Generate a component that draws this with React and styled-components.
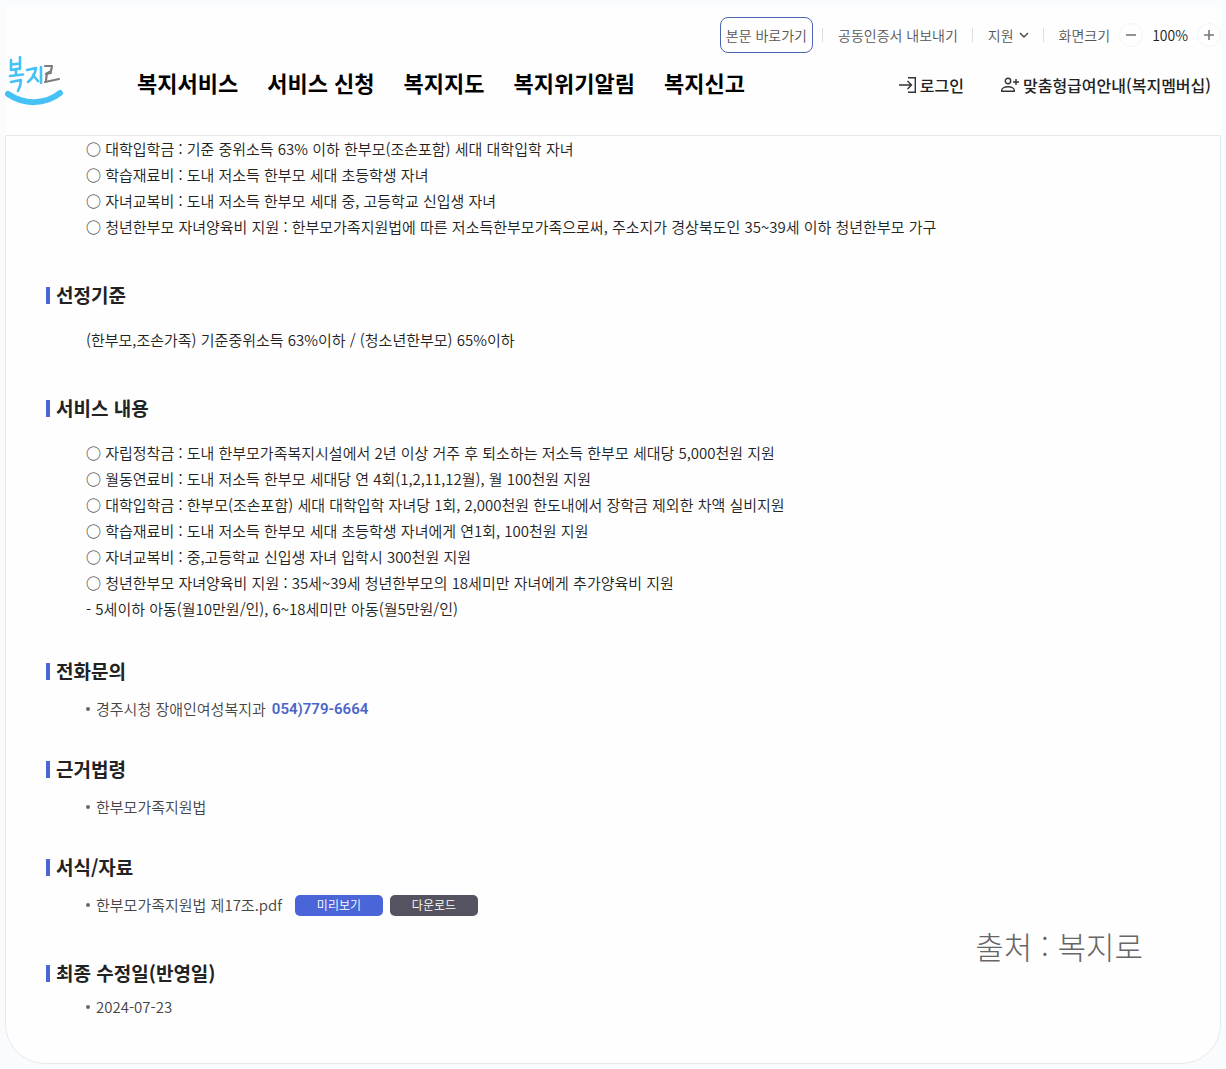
import React, { useState } from "react";
import styled, { createGlobalStyle } from "styled-components";

const sans = '"Noto Sans CJK KR", "Noto Sans", sans-serif';

const GlobalStyle = createGlobalStyle`
  *, *::before, *::after { box-sizing: border-box; }
  body {
    margin: 0;
    background: #fafbfd;
    color: #222;
    font-family: ${sans};
    font-size: 15px;
    font-weight: 350;
    line-height: 26px;
  }
  ul, p, h2 { margin: 0; padding: 0; }
  ul { list-style: none; }
  a { color: inherit; text-decoration: none; }
  button { font: inherit; color: inherit; cursor: pointer; }
`;

const Page = styled.div`
  padding: 7px 5px 5px;
`;

const Header = styled.header`
  padding-top: 10px;
  padding-bottom: 24px;
  background: #fefefe;
`;

const Utility = styled.div`
  display: flex;
  align-items: center;
  justify-content: flex-end;
  height: 36px;
  color: #555;
  font-size: 14px;
`;

const SkipLink = styled.a`
  height: 36px;
  padding: 0 5px;
  border: 1px solid #4a64b4;
  border-radius: 8px;
  line-height: 34px;
`;

const Divider = styled.span`
  width: 1px;
  height: 14px;
  margin: 0 15px 0 ${(p) => p.$left || 14}px;
  background: #ddd;
`;

const MenuButton = styled.button`
  display: flex;
  align-items: center;
  gap: 5px;
  padding: 0;
  border: 0;
  background: none;
`;

const ZoomGroup = styled.div`
  display: flex;
  align-items: center;
  gap: 9px;
`;

const ZoomButton = styled.button`
  display: flex;
  align-items: center;
  justify-content: center;
  width: 24px;
  height: 24px;
  padding: 0;
  border: 1px solid #f4f4f4;
  border-radius: 50%;
  background: none;
`;

const ZoomValue = styled.output`
  color: #222;
`;

const MainRow = styled.div`
  display: flex;
  align-items: center;
  height: 58px;
`;

const LogoLink = styled.a`
  display: flex;
  margin-right: 72px;
`;

const MenuArea = styled.div`
  display: flex;
  flex: 1;
  align-items: flex-end;
  justify-content: space-between;
`;

const Nav = styled.nav`
  display: flex;
  gap: 29px;
  color: #000;
  font-size: 22px;
  font-weight: 700;
  line-height: 32px;
`;

const Account = styled.div`
  display: flex;
  gap: 36px;
  padding-right: 10px;
  font-size: 16px;
  font-weight: 500;
`;

const AccountLink = styled.a`
  display: flex;
  align-items: center;
  gap: 3px;
`;

const Article = styled.main`
  padding: 0 40px 43px;
  border: 1px solid #e6eaef;
  border-radius: 0 0 40px 40px;
  background: #fefefe;
`;

const Section = styled.section`
  margin-top: ${(p) => p.$top || 0}px;
`;

const Title = styled.h2`
  display: flex;
  align-items: center;
  gap: 6px;
  margin-bottom: ${(p) => p.$bottom || 11}px;
  font-size: 19px;
  font-weight: 700;
  line-height: 28px;

  &::before {
    content: "";
    width: 4px;
    height: 17px;
    background: #4a65d4;
  }
`;

const Lines = styled.div`
  padding-left: 40px;
`;

const BulletList = styled.ul`
  padding-left: 40px;
  color: #444;
`;

const Bullet = styled.li`
  display: flex;
  align-items: center;

  &::before {
    content: "";
    width: 4px;
    height: 4px;
    margin-right: 6px;
    border-radius: 50%;
    background: #666;
  }
`;

const Phone = styled.a`
  margin-left: 6px;
  color: #4a65c8;
  font-family: Roboto, sans-serif;
  font-size: 15px;
  font-weight: 600;
`;

const FileActions = styled.span`
  display: flex;
  gap: 7px;
  margin-left: 13px;
`;

const FileButton = styled.button`
  width: 88px;
  height: 21px;
  padding: 0;
  border: 0;
  border-radius: 5px;
  background: ${(p) => (p.$primary ? "#4a65d8" : "#54535f")};
  color: #fff;
  font-size: 12px;
  line-height: 20px;
`;

const Footer = styled.div`
  display: flex;
  align-items: flex-start;
  justify-content: space-between;
`;

const Source = styled.p`
  padding: 8px 37px 0 0;
  color: #666;
  font-size: 31px;
  font-weight: 300;
  line-height: 40px;
`;

const Logo = () => (
  <svg width="60" height="52" viewBox="0 0 60 52" fill="none" strokeLinecap="round" strokeLinejoin="round" aria-hidden="true">
    <g stroke="#45c1f5" strokeWidth="2.6">
      <path d="M6 4v10M15 1v12M7 8.500l8-1M6 14l9-1.500M11 14v5M5 20l13-1.500M6 26l10-2c0 4-1 7-3 11" />
      <path d="M22 14l9-2c-1 6-4 11-8 14M28 19l5 6M36 11v16" />
    </g>
    <path d="M40 10h7l-1 5-5 3M41 18l5-1M42 17l-1 7M40 26l14-3" stroke="#7c7c80" strokeWidth="2.200" />
    <path d="M3 38c16 11 37 11 52-1" stroke="#45c1f5" strokeWidth="6" />
  </svg>
);

const LoginIcon = () => (
  <svg width="18" height="18" viewBox="0 0 18 18" fill="none" stroke="#333" strokeWidth="1.4" aria-hidden="true">
    <path d="M9 1.700h7.300v14.600H9M0 9h12.500M8.500 5l4 4-4 4" />
  </svg>
);

const MemberIcon = () => (
  <svg width="20" height="18" viewBox="0 0 20 18" fill="none" stroke="#333" strokeWidth="1.4" aria-hidden="true">
    <circle cx="8" cy="5" r="2.700" />
    <path d="M1.700 15.300v-1c0-2 2.600-3.600 6.300-3.600s6.300 1.600 6.300 3.600v1zM16 3v6M13 6h6" />
  </svg>
);

const Chevron = () => (
  <svg width="10" height="8" viewBox="0 0 10 8" fill="none" stroke="#444" strokeWidth="1.4" aria-hidden="true">
    <path d="M1 2l4 4 4-4" />
  </svg>
);

const Sign = ({ plus }) => (
  <svg width="10" height="10" viewBox="0 0 10 10" stroke="#777" strokeWidth="1.6" aria-hidden="true">
    <path d={plus ? "M0 5h10M5 0v10" : "M0 5h10"} />
  </svg>
);

const menu = ["복지서비스", "서비스 신청", "복지지도", "복지위기알림", "복지신고"];

const targets = [
  "○ 대학입학금 : 기준 중위소득 63% 이하 한부모(조손포함) 세대 대학입학 자녀",
  "○ 학습재료비 : 도내 저소득 한부모 세대 초등학생 자녀",
  "○ 자녀교복비 : 도내 저소득 한부모 세대 중, 고등학교 신입생 자녀",
  "○ 청년한부모 자녀양육비 지원 : 한부모가족지원법에 따른 저소득한부모가족으로써, 주소지가 경상북도인 35~39세 이하 청년한부모 가구",
];

const services = [
  "○ 자립정착금 : 도내 한부모가족복지시설에서 2년 이상 거주 후 퇴소하는 저소득 한부모 세대당 5,000천원 지원",
  "○ 월동연료비 : 도내 저소득 한부모 세대당 연 4회(1,2,11,12월), 월 100천원 지원",
  "○ 대학입학금 : 한부모(조손포함) 세대 대학입학 자녀당 1회, 2,000천원 한도내에서 장학금 제외한 차액 실비지원",
  "○ 학습재료비 : 도내 저소득 한부모 세대 초등학생 자녀에게 연1회, 100천원 지원",
  "○ 자녀교복비 : 중,고등학교 신입생 자녀 입학시 300천원 지원",
  "○ 청년한부모 자녀양육비 지원 : 35세~39세 청년한부모의 18세미만 자녀에게 추가양육비 지원",
  "- 5세이하 아동(월10만원/인), 6~18세미만 아동(월5만원/인)",
];

export default function App() {
  const [zoom, setZoom] = useState(100);
  return (
    <Page lang="ko">
      <GlobalStyle />
      <Header>
        <Utility>
          <SkipLink href="#content">본문 바로가기</SkipLink>
          <Divider $left={9} />
          <a href="#certificate">공동인증서 내보내기</a>
          <Divider />
          <MenuButton type="button">
            지원
            <Chevron />
          </MenuButton>
          <Divider />
          <ZoomGroup>
            <span>화면크기</span>
            <ZoomButton type="button" aria-label="축소" onClick={() => setZoom(zoom - 10)}>
              <Sign />
            </ZoomButton>
            <ZoomValue>{zoom}%</ZoomValue>
            <ZoomButton type="button" aria-label="확대" onClick={() => setZoom(zoom + 10)}>
              <Sign plus />
            </ZoomButton>
          </ZoomGroup>
        </Utility>
        <MainRow>
          <LogoLink href="#home" aria-label="복지로">
            <Logo />
          </LogoLink>
          <MenuArea>
            <Nav>
              {menu.map((name) => (
                <a key={name} href="#menu">{name}</a>
              ))}
            </Nav>
            <Account>
              <AccountLink href="#login">
                <LoginIcon />
                로그인
              </AccountLink>
              <AccountLink href="#membership">
                <MemberIcon />
                맞춤형급여안내(복지멤버십)
              </AccountLink>
            </Account>
          </MenuArea>
        </MainRow>
      </Header>
      <Article id="content">
        <Lines>
          {targets.map((line) => <p key={line}>{line}</p>)}
        </Lines>
        <Section $top={41}>
          <Title $bottom={18}>선정기준</Title>
          <Lines>
            <p>(한부모,조손가족) 기준중위소득 63%이하 / (청소년한부모) 65%이하</p>
          </Lines>
        </Section>
        <Section $top={41}>
          <Title $bottom={18}>서비스 내용</Title>
          <Lines>
            {services.map((line) => <p key={line}>{line}</p>)}
          </Lines>
        </Section>
        <Section $top={35}>
          <Title>전화문의</Title>
          <BulletList>
            <Bullet>
              경주시청 장애인여성복지과
              <Phone href="tel:054-779-6664">054)779-6664</Phone>
            </Bullet>
          </BulletList>
        </Section>
        <Section $top={33}>
          <Title>근거법령</Title>
          <BulletList>
            <Bullet>한부모가족지원법</Bullet>
          </BulletList>
        </Section>
        <Section $top={33}>
          <Title>서식/자료</Title>
          <BulletList>
            <Bullet>
              한부모가족지원법 제17조.pdf
              <FileActions>
                <FileButton type="button" $primary>미리보기</FileButton>
                <FileButton type="button">다운로드</FileButton>
              </FileActions>
            </Bullet>
          </BulletList>
        </Section>
        <Footer>
          <Section $top={41}>
            <Title $bottom={7}>최종 수정일(반영일)</Title>
            <BulletList>
              <Bullet>2024-07-23</Bullet>
            </BulletList>
          </Section>
          <Source>출처 : 복지로</Source>
        </Footer>
      </Article>
    </Page>
  );
}
